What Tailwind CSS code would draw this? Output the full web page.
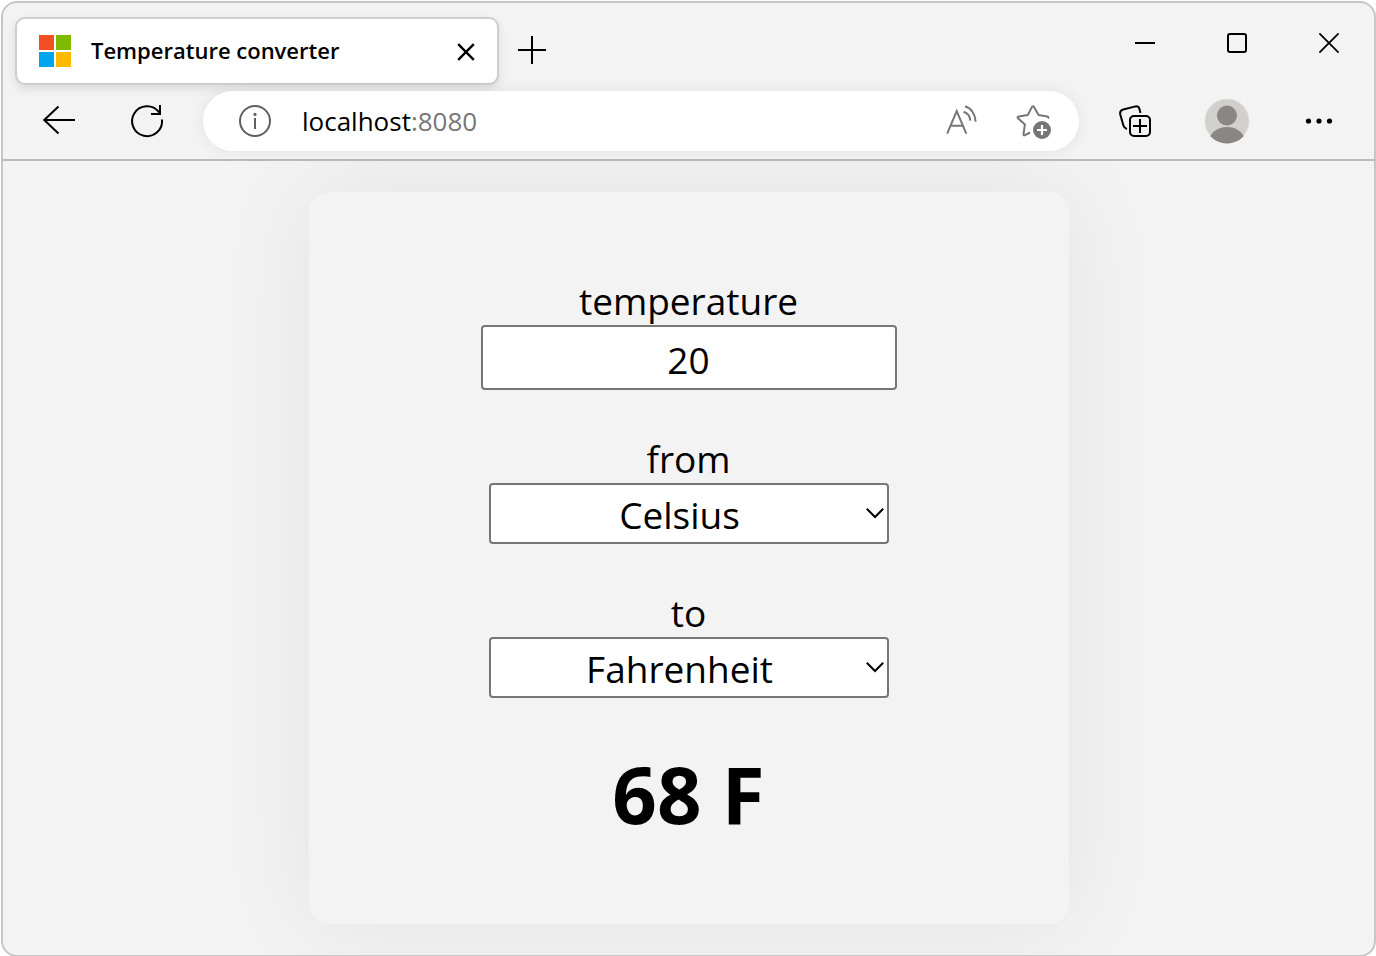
<!DOCTYPE html>
<html lang="en">
<head>
<meta charset="utf-8">
<meta name="viewport" content="width=device-width, initial-scale=1">
<title>Temperature converter</title>
<script src="https://cdn.jsdelivr.net/npm/@tailwindcss/browser@4"></script>
</head>
<body class="h-screen overflow-hidden bg-white pt-px pl-px font-['Open_Sans','Noto_Sans',sans-serif] text-black">
<div class="overflow-hidden rounded-2xl border-2 border-[#c6c6c6] bg-[#f3f3f3]">
  <header class="border-b-2 border-[#bababa]">
    <div class="flex items-start pt-3.5 pl-3">
      <div class="flex h-[68px] w-[484px] items-center rounded-[10px] border-2 border-[#cecece] bg-white pr-[22px] pl-[22px] shadow-[0_4px_10px_rgba(0,0,0,0.1)]">
        <svg class="size-8 shrink-0" viewBox="0 0 32 32" aria-hidden="true">
          <path fill="#f25022" d="M0 0h15v15H0z"/><path fill="#7fba00" d="M17 0h15v15H17z"/>
          <path fill="#00a4ef" d="M0 17h15v15H0z"/><path fill="#ffb900" d="M17 17h15v15H17z"/>
        </svg>
        <span class="ml-5 grow pb-0.5 text-[22px] leading-8 font-semibold">Temperature converter</span>
        <button type="button" aria-label="Close tab" class="pt-0.5">
          <svg class="size-[18px]" viewBox="0 0 18 18" fill="none" stroke="#000" stroke-width="2.4"><path d="M1.2 1.2l15.6 15.6M16.8 1.2L1.2 16.8"/></svg>
        </button>
      </div>
      <button type="button" aria-label="New tab" class="mt-[19px] ml-[19px]">
        <svg class="size-7" viewBox="0 0 28 28" fill="none" stroke="#000" stroke-width="2"><path d="M14 0v28M0 14h28"/></svg>
      </button>
      <div class="mt-1.5 mr-[5px] ml-auto flex gap-3">
        <button type="button" aria-label="Minimize" class="flex h-10 w-20 items-center justify-center">
          <svg class="size-5" viewBox="0 0 20 20" fill="none" stroke="#000" stroke-width="2"><path d="M0 10h20"/></svg>
        </button>
        <button type="button" aria-label="Maximize" class="flex h-10 w-20 items-center justify-center">
          <svg class="size-5" viewBox="0 0 20 20" fill="none" stroke="#000" stroke-width="2"><rect x="1" y="1" width="18" height="18" rx="2"/></svg>
        </button>
        <button type="button" aria-label="Close window" class="flex h-10 w-20 items-center justify-center">
          <svg class="size-5" viewBox="0 0 20 20" fill="none" stroke="#000" stroke-width="1.8"><path d="M.4.4l19.2 19.2M19.6.4L.4 19.6"/></svg>
        </button>
      </div>
    </div>
    <div class="flex items-center pt-1.5 pr-[31px] pb-2 pl-8">
      <button type="button" aria-label="Back" class="flex size-12 items-center justify-center">
        <svg class="size-9" viewBox="0 0 36 36" fill="none" stroke="#000" stroke-width="2"><path d="M34 17H3M17.5 3.5L3.2 17l14.3 13.5"/></svg>
      </button>
      <button type="button" aria-label="Refresh" class="ml-10 flex size-12 items-center justify-center">
        <svg class="size-9" viewBox="0 0 36 36" fill="none" stroke="#000" stroke-width="2"><path d="M33 16.5A15 15 0 1 1 29.8 8.8L31 10.500"/><path d="M31 2v9H22"/></svg>
      </button>
      <div class="mx-8 flex h-[60px] grow items-center rounded-full bg-white pr-[27px] pl-9 shadow-[0_0_16px_rgba(0,0,0,0.07)]">
        <button type="button" aria-label="Site information">
          <svg class="size-8" viewBox="0 0 32 32" fill="none" stroke="#5f5f5f" stroke-width="2"><circle cx="16" cy="16" r="15"/><path d="M16 13v11"/><circle cx="16" cy="9.4" r="1.6" fill="#5f5f5f" stroke="none"/></svg>
        </button>
        <div role="textbox" aria-label="Address" contenteditable="true" spellcheck="false" class="ml-[31px] grow text-[26px] leading-9 outline-none">localhost<span class="text-[#767676]">:8080</span></div>
        <button type="button" aria-label="Read aloud">
          <svg class="size-8" viewBox="0 0 32 32" fill="none" stroke="#767676" stroke-width="2"><path d="M1.2 28.6L10.7 6l9.6 22.6M4.6 20.8h12.2"/><path d="M19 1.3C25 3 29.3 9 29.6 16.6M17.6 6.8C21.5 8 24 11 24.2 15.6"/></svg>
        </button>
        <button type="button" aria-label="Add to favorites" class="ml-[38px]">
          <svg class="size-9" viewBox="0 0 36 36" fill="none" stroke="#767676" stroke-width="2" stroke-linejoin="round"><path d="M14 29.500L9 32.200Q7.200 33 7.500 31L8.900 21.600L2 15.200Q1 13.800 2.600 13.400L11.800 12L16 3.900Q17 2.600 18 3.900L22.600 12L31.400 13.400Q33 13.800 32 15.600"/><circle cx="26" cy="27" r="9" fill="#767676" stroke="none"/><path stroke="#fff" stroke-width="2.2" d="M26 22v10M21 27h10"/></svg>
        </button>
      </div>
      <button type="button" aria-label="Collections" class="flex size-12 items-center justify-center">
        <svg class="size-8" viewBox="0 0 32 32" fill="none" stroke="#000" stroke-width="2"><rect x="11" y="11" width="20" height="20" rx="4"/><path d="M21 14v14M14 21h14"/><path d="M21.5 8l-1.1-4.2Q19.5.8 16.5 1.4L4.2 4.5Q.6 5.600 1.2 9.2L4.4 20.5Q5.2 23.3 8 24"/></svg>
      </button>
      <button type="button" aria-label="Profile" class="ml-11 flex size-12 items-center justify-center">
        <svg class="size-[46px]" viewBox="0 0 46 46"><defs><clipPath id="avatar"><circle cx="23" cy="23" r="22.5"/></clipPath></defs><circle cx="23" cy="23" r="22" fill="#d2d0cc" stroke="#dedddb"/><circle cx="23" cy="17.5" r="10" fill="#8a8683"/><ellipse cx="23" cy="43.500" rx="18" ry="14.5" fill="#8a8683" clip-path="url(#avatar)"/></svg>
      </button>
      <button type="button" aria-label="Settings and more" class="ml-11 flex size-12 items-center justify-center">
        <svg class="size-7" viewBox="0 0 28 28"><circle cx="3.5" cy="14" r="2.6"/><circle cx="14" cy="14" r="2.6"/><circle cx="24.5" cy="14" r="2.6"/></svg>
      </button>
    </div>
  </header>
  <main class="overflow-hidden py-[31px]">
    <form class="mx-auto flex max-w-[760px] flex-col items-center rounded-[20px] bg-[#f3f3f3] pt-[85px] pb-[79px] text-[37px] shadow-[0_0_100px_rgba(0,0,0,0.07)]">
      <label for="temp" class="leading-[48px]">temperature</label>
      <input id="temp" type="text" inputmode="decimal" value="20" class="h-[65px] w-[416px] rounded-[4px] border-2 border-[#767676] bg-white pt-1 text-center outline-none">
      <label for="from" class="mt-[45px] leading-[48px]">from</label>
      <div class="relative">
        <select id="from" class="block h-[61px] w-[400px] appearance-none rounded-[4px] border-2 border-[#767676] bg-white pt-0.5 pr-[18px] text-center outline-none"><option>Celsius</option><option>Fahrenheit</option></select>
        <svg class="pointer-events-none absolute top-6 right-1 h-3 w-5" viewBox="0 0 20 12" fill="none" stroke="#000" stroke-width="2"><path d="M1.8 1.8L10 10l8.2-8.2"/></svg>
      </div>
      <label for="to" class="mt-[45px] leading-[48px]">to</label>
      <div class="relative">
        <select id="to" class="block h-[61px] w-[400px] appearance-none rounded-[4px] border-2 border-[#767676] bg-white pt-0.5 pr-[18px] text-center outline-none"><option>Fahrenheit</option><option>Celsius</option></select>
        <svg class="pointer-events-none absolute top-6 right-1 h-3 w-5" viewBox="0 0 20 12" fill="none" stroke="#000" stroke-width="2"><path d="M1.8 1.8L10 10l8.2-8.2"/></svg>
      </div>
      <output for="temp from to" class="mt-[45px] text-[78px] leading-[102px] font-bold">68 F</output>
    </form>
  </main>
</div>
</body>
</html>
